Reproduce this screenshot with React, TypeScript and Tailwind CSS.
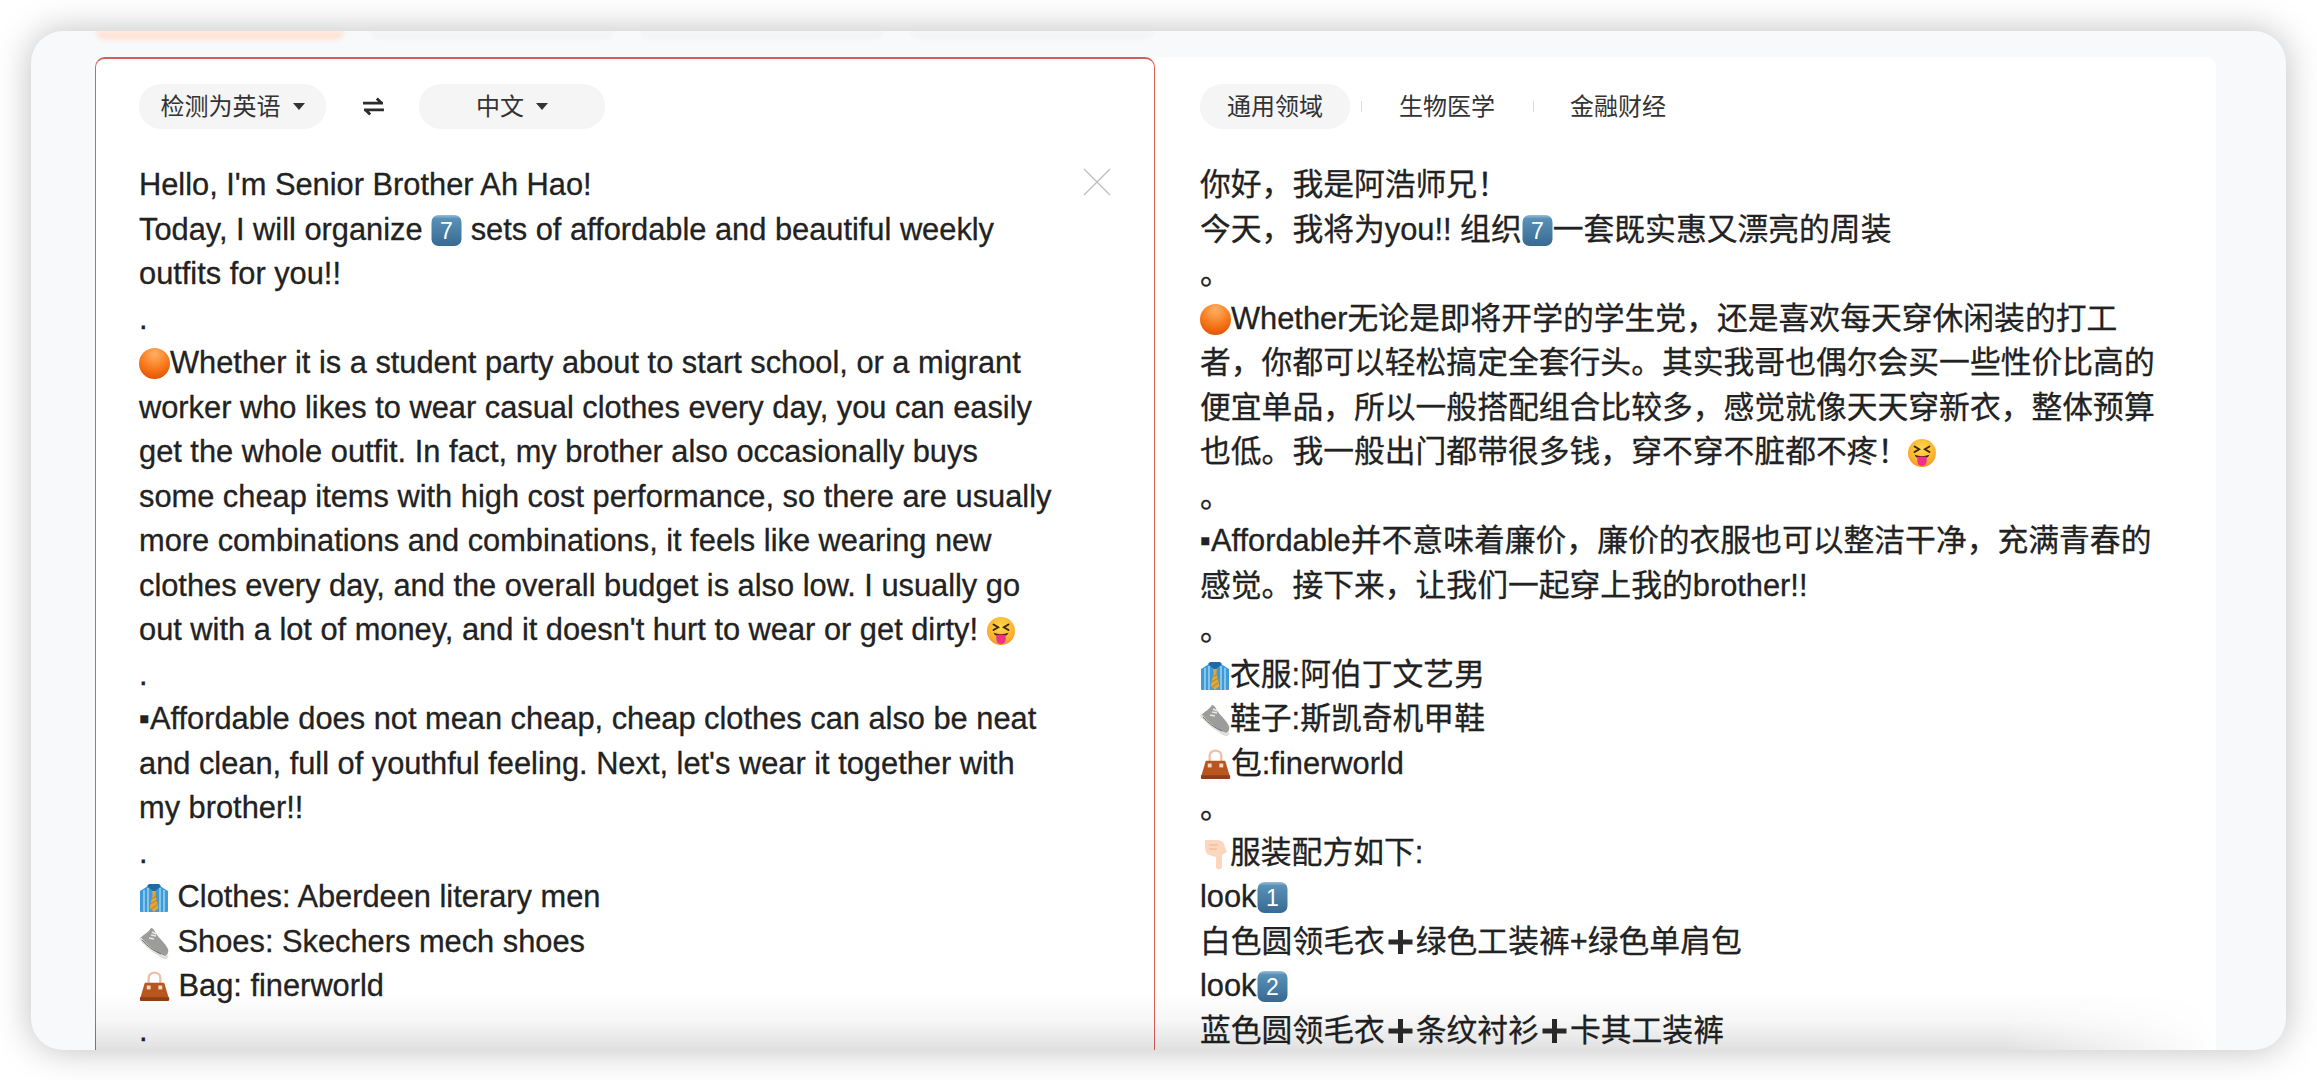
import type { ReactNode } from "react"

const fontStack = "font-['Liberation_Sans','Noto_Sans_CJK_SC',sans-serif]"

function Keycap({ n }: { n: string }) {
  return (
    <svg viewBox="0 0 31 31" className="inline-block w-[31px] h-[31px] align-[-6px]">
      <defs>
        <linearGradient id={`key${n}`} x1="0" y1="0" x2="0" y2="1">
          <stop offset="0" stopColor="#9cc0d8" />
          <stop offset="0.12" stopColor="#5890b6" />
          <stop offset="1" stopColor="#386a92" />
        </linearGradient>
      </defs>
      <rect x="0.500" y="0" width="30" height="31" rx="7" fill={`url(#key${n})`} />
      <text x="15.500" y="24" textAnchor="middle" fontSize="23" fill="#fff" fontFamily="Liberation Sans, sans-serif">
        {n}
      </text>
    </svg>
  )
}

function OrangeDot() {
  return (
    <svg viewBox="0 0 30 30" className="inline-block w-[31px] h-[31px] align-[-6px]">
      <defs>
        <radialGradient id="dot" cx="0.5" cy="0.2" r="0.85">
          <stop offset="0" stopColor="#ffb066" />
          <stop offset="0.55" stopColor="#f97a1c" />
          <stop offset="1" stopColor="#e04e00" />
        </radialGradient>
      </defs>
      <circle cx="15" cy="15" r="15" fill="url(#dot)" />
    </svg>
  )
}

function Shirt() {
  return (
    <svg viewBox="0 0 30 30" className="inline-block w-[30px] h-[30px] align-[-6px]">
      <path d="M1 8 9 3h12l8 5v20a1 1 0 0 1-1 1H2a1 1 0 0 1-1-1z" fill="#3f9bd8" />
      <path d="M5 7v22M9 5v24M21 5v24M25 7v22" stroke="#a6d6f2" strokeWidth="1.400" />
      <path d="M8 3l7 6 7-6-2-2H10z" fill="#1c6aa8" />
      <path d="M13 8h4l-.6 4 3 13-4.400 4-4.400-4 3-13z" fill="#e0a63a" />
      <path d="M12 16l6-3M11.500 21l7-4M12 26l6-4" stroke="#b8802a" strokeWidth="1" />
    </svg>
  )
}

function Shoe() {
  return (
    <svg viewBox="0 0 30 32" className="inline-block w-[30px] h-[32px] align-[-7px]">
      <path d="M12 1c3 0 4 4 6 7 3 4 8 8 11 14 1 3-1 7-3 7l-5-2C15 23 6 17 1 11 4 8 9 6 12 1z" fill="#9c9c9a" />
      <path d="M1 11c5 7 13 13 21 18l4 2 3-2" fill="none" stroke="#dededc" strokeWidth="2.600" />
      <path d="M13 5l4 2M12 8l5 1M10 11l5 1" stroke="#e6e6e4" strokeWidth="1.500" />
      <path d="M3 13c5 6 12 11 19 14" fill="none" stroke="#6a6a68" strokeWidth="1" />
    </svg>
  )
}

function Bag() {
  return (
    <svg viewBox="0 0 32 32" className="inline-block w-[31px] h-[31px] align-[-6px]">
      <path d="M10 14V7c0-7 12-7 12 0v7" fill="none" stroke="#edbfa8" strokeWidth="2.400" />
      <path d="M6 12h20l5 17c.3 1.500-.5 2-2 2H3c-1.500 0-2.300-.5-2-2z" fill="#b9551e" />
      <path d="M1 27h30l.2 2c.1 1.500-.7 2-2.200 2H3c-1.500 0-2.300-.5-2-2z" fill="#8f3f14" />
      <rect x="8" y="15" width="4" height="4" fill="#f3dcc8" />
      <rect x="20" y="15" width="4" height="4" fill="#f3dcc8" />
    </svg>
  )
}

function TongueFace() {
  return (
    <svg viewBox="0 0 30 30" className="inline-block w-[28px] h-[28px] align-[-5px]">
      <defs>
        <radialGradient id="face" cx="0.5" cy="0.35" r="0.75">
          <stop offset="0" stopColor="#ffd84a" />
          <stop offset="0.7" stopColor="#fbae2c" />
          <stop offset="1" stopColor="#ef7d1a" />
        </radialGradient>
      </defs>
      <circle cx="15" cy="15" r="15" fill="url(#face)" />
      <path d="M7 8l5 3-5 3M23 8l-5 3 5 3" fill="none" stroke="#3a2410" strokeWidth="2" strokeLinecap="round" />
      <path d="M7 17c5 2 11 2 16 0-1 3-4 4-8 4s-7-1-8-4z" fill="#4a1c10" />
      <path d="M10 19h10v5a5 5 0 0 1-10 0z" fill="#f0308c" />
    </svg>
  )
}

function PointDown() {
  return (
    <svg viewBox="0 0 30 32" className="inline-block w-[30px] h-[32px] align-[-7px]">
      <path d="M5 2h14l4 2 4 10-5 3v12c0 3-6 3-6 0V19l-7-2C6 16 5 12 5 8z" fill="#fcd6bd" />
      <path d="M9 7h9M9 11h8" stroke="#edb596" strokeWidth="1" fill="none" />
    </svg>
  )
}

function HeavyPlus() {
  return (
    <svg viewBox="0 0 30 30" className="inline-block w-[31px] h-[30px] align-[-5px]">
      <path d="M12.500 3h5v9.500H27v5h-9.500V27h-5v-9.500H3v-5h9.500z" fill="#2b2b2b" />
    </svg>
  )
}

const leftLines: ReactNode[] = [
  "Hello, I'm Senior Brother Ah Hao!",
  <>Today, I will organize <Keycap n="7" /> sets of affordable and beautiful weekly</>,
  "outfits for you!!",
  ".",
  <><OrangeDot />Whether it is a student party about to start school, or a migrant</>,
  "worker who likes to wear casual clothes every day, you can easily",
  "get the whole outfit. In fact, my brother also occasionally buys",
  "some cheap items with high cost performance, so there are usually",
  "more combinations and combinations, it feels like wearing new",
  "clothes every day, and the overall budget is also low. I usually go",
  <>out with a lot of money, and it doesn't hurt to wear or get dirty! <TongueFace /></>,
  ".",
  "▪Affordable does not mean cheap, cheap clothes can also be neat",
  "and clean, full of youthful feeling. Next, let's wear it together with",
  "my brother!!",
  ".",
  <><Shirt /> Clothes: Aberdeen literary men</>,
  <><Shoe /> Shoes: Skechers mech shoes</>,
  <><Bag /> Bag: finerworld</>,
  ".",
]

const rightLines: ReactNode[] = [
  "你好，我是阿浩师兄！",
  <>今天，我将为you!! 组织<Keycap n="7" />一套既实惠又漂亮的周装</>,
  "。",
  <><OrangeDot />Whether无论是即将开学的学生党，还是喜欢每天穿休闲装的打工</>,
  "者，你都可以轻松搞定全套行头。其实我哥也偶尔会买一些性价比高的",
  "便宜单品，所以一般搭配组合比较多，感觉就像天天穿新衣，整体预算",
  <>也低。我一般出门都带很多钱，穿不穿不脏都不疼！<TongueFace /></>,
  "。",
  "▪Affordable并不意味着廉价，廉价的衣服也可以整洁干净，充满青春的",
  "感觉。接下来，让我们一起穿上我的brother!!",
  "。",
  <><Shirt />衣服:阿伯丁文艺男</>,
  <><Shoe />鞋子:斯凯奇机甲鞋</>,
  <><Bag />包:finerworld</>,
  "。",
  <><PointDown />服装配方如下:</>,
  <>look<Keycap n="1" /></>,
  <>白色圆领毛衣<HeavyPlus />绿色工装裤+绿色单肩包</>,
  <>look<Keycap n="2" /></>,
  <>蓝色圆领毛衣<HeavyPlus />条纹衬衫<HeavyPlus />卡其工装裤</>,
]

function Caret() {
  return <span className="w-0 h-0 border-x-[6px] border-x-transparent border-t-[7px] border-t-[#333]" />
}

function LangPill({ label, width }: { label: string; width: string }) {
  return (
    <div className={`flex items-center justify-center gap-[12px] h-[45px] rounded-[22px] bg-[#f5f5f6] text-[24px] text-[#333] ${width}`}>
      <span>{label}</span>
      <Caret />
    </div>
  )
}

function TextBlock({ lines }: { lines: ReactNode[] }) {
  return (
    <div className="text-[30.8px] leading-[44.5px] text-[#222] [-webkit-text-stroke:0.3px_#222]">
      {lines.map((line, i) => (
        <div key={i} className="h-[44.5px] whitespace-nowrap">
          {line}
        </div>
      ))}
    </div>
  )
}

export default function App() {
  return (
    <div className={`w-[2317px] h-[1080px] bg-white pt-[31px] pl-[31px] overflow-hidden ${fontStack}`}>
      <div className="relative w-[2255px] h-[1019px] rounded-[32px] bg-[#f8f9fb] overflow-hidden shadow-[0_0_36px_rgba(0,0,0,0.26)]">
        {/* cut off tab strip */}
        <div className="flex h-[26px] pl-[65px] gap-[26px]">
          <div className="w-[248px] h-[9px] rounded-b-[10px] bg-[#ffe3d4] blur-[2px]" />
          <div className="w-[244px] h-[9px] rounded-b-[10px] bg-[#f4f5f7] blur-[1px]" />
          <div className="w-[244px] h-[9px] rounded-b-[10px] bg-[#f4f5f7] blur-[1px]" />
          <div className="w-[244px] h-[9px] rounded-b-[10px] bg-[#f4f5f7] blur-[1px]" />
        </div>

        <div className="relative flex pl-[64px] h-[993px]">
          {/* source panel */}
          <div className="relative w-[1060px] h-[1040px] rounded-[10px] bg-white border border-[#dc5f58] border-t-2 border-t-[#d0605a] pl-[43px] pt-[25px]">
            <div className="flex items-center">
              <LangPill label="检测为英语" width="w-[187px]" />
              <svg viewBox="0 0 24 20" className="w-[23px] h-[19px] ml-[36px] mr-[34px]">
                <path d="M1 6.500h21M15.500 1.500l5 5" fill="none" stroke="#2b2b2b" strokeWidth="3" />
                <path d="M23 13.500H2M8.500 18.500l-5-5" fill="none" stroke="#2b2b2b" strokeWidth="3" />
              </svg>
              <LangPill label="中文" width="w-[186px]" />
            </div>
            <div className="mt-[34px]">
              <TextBlock lines={leftLines} />
            </div>
            <svg viewBox="0 0 28 28" className="absolute top-[109px] right-[43px] w-[28px] h-[28px]">
              <path d="M1 1l26 26M27 1L1 27" stroke="#bdbdbd" strokeWidth="1.300" fill="none" />
            </svg>
          </div>

          {/* result panel */}
          <div className="w-[1061px] h-[1040px] rounded-tr-[10px] bg-white pl-[45px] pt-[27px]">
            <div className="flex items-center text-[24px] text-[#333] h-[45px] whitespace-nowrap">
              <div className="flex items-center justify-center w-[150px] h-[45px] rounded-[22px] bg-[#f5f5f6]">通用领域</div>
              <div className="w-px h-[11px] bg-[#dcdcdc] ml-[11px]" />
              <div className="w-[96px] ml-[37px]">生物医学</div>
              <div className="w-px h-[11px] bg-[#dcdcdc] ml-[38px]" />
              <div className="w-[96px] ml-[36px]">金融财经</div>
            </div>
            <div className="mt-[34px]">
              <TextBlock lines={rightLines} />
            </div>
          </div>

          {/* bottom fade over the panels */}
          <div className="absolute left-[64px] bottom-0 w-[2121px] h-[58px] bg-gradient-to-b from-transparent via-black/[0.035] to-black/[0.12] [mask-image:linear-gradient(to_right,black_90%,transparent)]" />
        </div>
      </div>
    </div>
  )
}
